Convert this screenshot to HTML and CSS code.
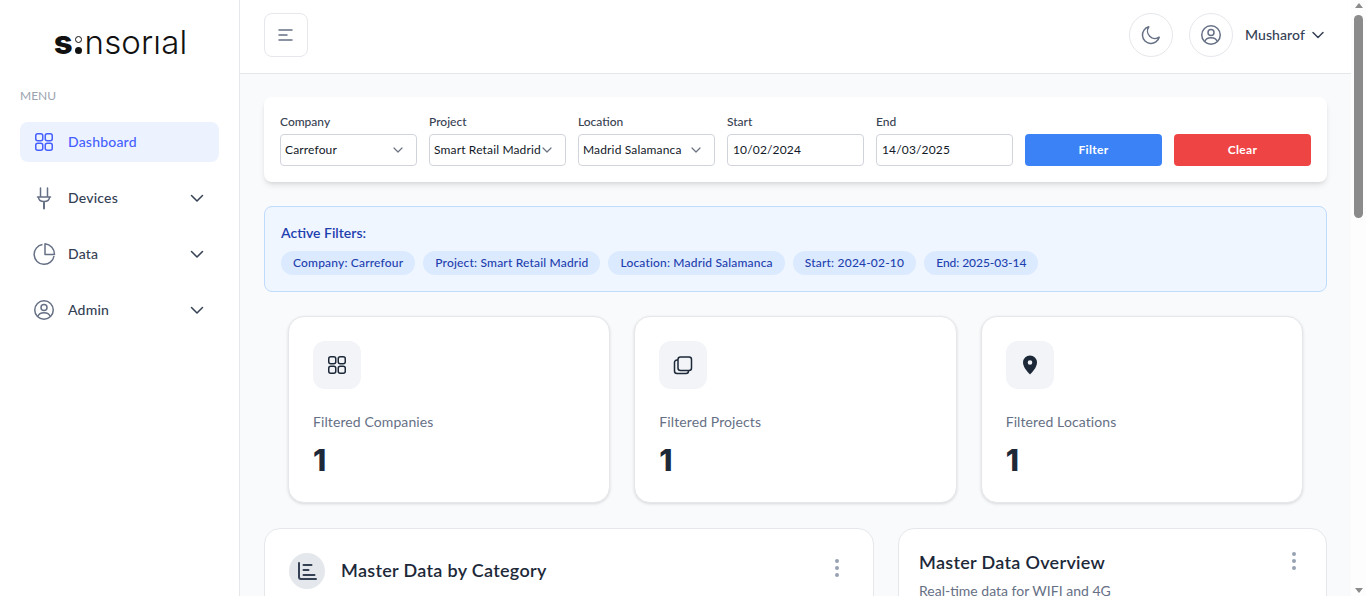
FILE: index.html
```html
<!DOCTYPE html>
<html lang="en">
<head>
    <meta charset="UTF-8">
    <title>Sensorial Dashboard</title>
    <link rel="stylesheet" href="styles.css">
</head>
<body>
<div class="app">
    <aside class="sidebar">
        <div class="logo"><span class="logo-s">s</span><span class="logo-colon"><i class="dot-ring"></i><i class="dot-fill"></i></span><span class="logo-rest">nsorıal</span></div>
        <div class="menu-label">MENU</div>
        <nav class="menu">
            <a class="menu-item active">
                <svg class="icon" viewBox="0 0 24 24" fill="none" stroke="currentColor" stroke-width="1.5"><rect x="3.75" y="3.75" width="7" height="7" rx="2"/><rect x="13.25" y="3.75" width="7" height="7" rx="2"/><rect x="3.75" y="13.25" width="7" height="7" rx="2"/><rect x="13.25" y="13.25" width="7" height="7" rx="2"/></svg>
                <span>Dashboard</span>
            </a>
            <a class="menu-item">
                <svg class="icon" viewBox="0 0 24 24" fill="none" stroke="currentColor" stroke-width="1.5" stroke-linecap="round" stroke-linejoin="round"><path d="M8.500 2v9M15.500 2v9M5.500 11h13M6.500 11c0 3 2 4.500 5.500 4.500s5.500-1.500 5.500-4.500"/><path d="M12 16.500v6" stroke-width="2"/></svg>
                <span>Devices</span>
                <svg class="chev" viewBox="0 0 16 16" fill="none" stroke="currentColor" stroke-width="1.5" stroke-linecap="round" stroke-linejoin="round"><path d="M2.500 5.500L8 11l5.500-5.500"/></svg>
            </a>
            <a class="menu-item">
                <svg class="icon" viewBox="0 0 24 24" fill="none" stroke="currentColor" stroke-width="1.5" stroke-linejoin="round"><path d="M10.500 2.500A10 10 0 1 0 22 14"/><path d="M13 1.800V12.500H22.500A10.500 10.500 0 0 0 13 1.800z"/></svg>
                <span>Data</span>
                <svg class="chev" viewBox="0 0 16 16" fill="none" stroke="currentColor" stroke-width="1.5" stroke-linecap="round" stroke-linejoin="round"><path d="M2.500 5.500L8 11l5.500-5.500"/></svg>
            </a>
            <a class="menu-item">
                <svg class="icon" viewBox="0 0 24 24" fill="none" stroke="currentColor" stroke-width="1.5"><circle cx="12" cy="12" r="9.250"/><circle cx="12" cy="9.500" r="3"/><path d="M5.800 18.500c.8-2.300 3.200-3.800 6.200-3.800s5.400 1.500 6.200 3.800"/></svg>
                <span>Admin</span>
                <svg class="chev" viewBox="0 0 16 16" fill="none" stroke="currentColor" stroke-width="1.5" stroke-linecap="round" stroke-linejoin="round"><path d="M2.500 5.500L8 11l5.500-5.500"/></svg>
            </a>
        </nav>
    </aside>

    <div class="content">
        <header class="topbar">
            <button class="square-btn">
                <svg viewBox="0 0 16 12" width="16" height="12" fill="none" stroke="#667085" stroke-width="1.5" stroke-linecap="round"><path d="M1 1h13M1 6h8M1 11h13"/></svg>
            </button>
            <div class="topbar-right">
                <button class="round-btn">
                    <svg viewBox="0 0 20 20" width="20" height="20" fill="none" stroke="#667085" stroke-width="1.5" stroke-linejoin="round"><path d="M7.800 1.800A8.500 8.500 0 1 0 18.200 12.200 7.500 7.500 0 0 1 7.800 1.800z"/></svg>
                </button>
                <button class="round-btn">
                    <svg viewBox="0 0 24 24" width="24" height="24" fill="none" stroke="#667085" stroke-width="1.500"><circle cx="12" cy="12" r="9.250"/><circle cx="12" cy="9.500" r="3"/><path d="M5.800 18.500c.8-2.300 3.200-3.800 6.200-3.800s5.400 1.500 6.200 3.800"/></svg>
                </button>
                <div class="user">
                    <span>Musharof</span>
                    <svg viewBox="0 0 16 16" width="16" height="16" fill="none" stroke="#344054" stroke-width="1.500" stroke-linecap="round" stroke-linejoin="round"><path d="M3 5.500l5 5 5-5"/></svg>
                </div>
            </div>
        </header>

        <main class="main">
            <section class="filter-card">
                <div class="field">
                    <label>Company</label>
                    <div class="control select"><span>Carrefour</span><svg viewBox="0 0 12 12" class="caret" fill="none" stroke="#6b7280" stroke-width="1.200" stroke-linecap="round" stroke-linejoin="round"><path d="M2 4l4 4 4-4"/></svg></div>
                </div>
                <div class="field">
                    <label>Project</label>
                    <div class="control select"><span>Smart Retail Madrid</span><svg viewBox="0 0 12 12" class="caret" fill="none" stroke="#6b7280" stroke-width="1.200" stroke-linecap="round" stroke-linejoin="round"><path d="M2 4l4 4 4-4"/></svg></div>
                </div>
                <div class="field">
                    <label>Location</label>
                    <div class="control select"><span>Madrid Salamanca</span><svg viewBox="0 0 12 12" class="caret" fill="none" stroke="#6b7280" stroke-width="1.200" stroke-linecap="round" stroke-linejoin="round"><path d="M2 4l4 4 4-4"/></svg></div>
                </div>
                <div class="field">
                    <label>Start</label>
                    <div class="control date">10/02/2024</div>
                </div>
                <div class="field">
                    <label>End</label>
                    <div class="control date">14/03/2025</div>
                </div>
                <button class="action filter">Filter</button>
                <button class="action clear">Clear</button>
            </section>

            <section class="active-filters">
                <div class="active-title">Active Filters:</div>
                <div class="chips">
                    <span class="chip">Company: Carrefour</span>
                    <span class="chip">Project: Smart Retail Madrid</span>
                    <span class="chip">Location: Madrid Salamanca</span>
                    <span class="chip chip-start">Start: 2024-02-10</span>
                    <span class="chip chip-end">End: 2025-03-14</span>
                </div>
            </section>

            <section class="stats">
                <div class="stat-card">
                    <div class="stat-icon"><svg viewBox="0 0 24 24" width="24" height="24" fill="none" stroke="#1d2939" stroke-width="1.500"><rect x="3.750" y="3.750" width="7" height="7" rx="2"/><rect x="13.250" y="3.750" width="7" height="7" rx="2"/><rect x="3.750" y="13.250" width="7" height="7" rx="2"/><rect x="13.250" y="13.250" width="7" height="7" rx="2"/></svg></div>
                    <div class="stat-label">Filtered Companies</div>
                    <div class="stat-value">1</div>
                </div>
                <div class="stat-card">
                    <div class="stat-icon"><svg viewBox="0 0 24 24" width="24" height="24" fill="none" stroke="#1d2939" stroke-width="1.500" stroke-linejoin="round"><rect x="7" y="4" width="13.500" height="13.500" rx="2.500"/><path d="M7 7H6a2.500 2.500 0 0 0-2.500 2.500v8.500A2.500 2.500 0 0 0 6 20.500h9a2.500 2.500 0 0 0 2.500-2.500"/></svg></div>
                    <div class="stat-label">Filtered Projects</div>
                    <div class="stat-value">1</div>
                </div>
                <div class="stat-card">
                    <div class="stat-icon"><svg viewBox="0 0 24 24" width="24" height="24"><path fill="#1d2939" fill-rule="evenodd" d="M12 2.500a7 7 0 0 0-7 7c0 4.800 5 10 7 12 2-2 7-7.200 7-12a7 7 0 0 0-7-7zm0 9.300a2.300 2.300 0 1 1 0-4.600 2.300 2.300 0 0 1 0 4.600z"/></svg></div>
                    <div class="stat-label">Filtered Locations</div>
                    <div class="stat-value">1</div>
                </div>
            </section>

            <section class="charts">
                <div class="chart-card category">
                    <div class="chart-head">
                        <div class="chart-badge"><svg viewBox="0 0 24 24" width="24" height="24" fill="none" stroke="#344054" stroke-width="2" stroke-linecap="round"><path d="M4 4v14a2 2 0 0 0 2 2h15M8.500 6h8M8.500 11h5M8.500 16h11"/></svg></div>
                        <h3>Master Data by Category</h3>
                        <svg class="more" viewBox="0 0 4 20" width="4" height="20" fill="#98a2b3"><circle cx="2" cy="3" r="2"/><circle cx="2" cy="10" r="2"/><circle cx="2" cy="17" r="2"/></svg>
                    </div>
                </div>
                <div class="chart-card overview">
                    <div class="overview-head">
                        <div>
                            <h3>Master Data Overview</h3>
                            <p>Real-time data for WIFI and 4G</p>
                        </div>
                        <svg class="more" viewBox="0 0 4 20" width="4" height="20" fill="#98a2b3"><circle cx="2" cy="3" r="2"/><circle cx="2" cy="10" r="2"/><circle cx="2" cy="17" r="2"/></svg>
                    </div>
                </div>
            </section>
        </main>
    </div>

    <div class="scrollbar">
        <i class="arrow-up"></i>
        <div class="scroll-track"><div class="scroll-thumb"></div></div>
        <i class="arrow-down"></i>
    </div>
</div>
</body>
</html>
```

FILE: styles.css
```css
* {
    box-sizing: border-box;
}
body {
    margin: 0;
    font-family: "Lato", "Liberation Sans", sans-serif;
    color: #344054;
    background-color: #f9fafb;
}
button {
    font-family: inherit;
    cursor: pointer;
}
svg {
    display: block;
    flex-shrink: 0;
}
.app {
    display: flex;
    height: 100vh;
    overflow: hidden;
}

/* sidebar */
.sidebar {
    width: 240px;
    flex-shrink: 0;
    background-color: #fff;
    border-right: 1px solid #e5e7eb;
    padding: 0 20px;
}
.logo {
    height: 88px;
    padding: 24px 0 0 2px;
    text-align: center;
    white-space: nowrap;
    color: #111;
    font-family: "Inter", sans-serif;
    font-size: 33px;
    line-height: 36px;
}
.logo-s {
    font-weight: 800;
}
.logo-colon {
    display: inline-block;
    margin: 0 3px 0 2px;
}
.logo-colon i {
    display: block;
    width: 7px;
    height: 7px;
    border-radius: 50%;
}
.dot-ring {
    border: 1.5px solid #111;
    margin-bottom: 4px;
}
.dot-fill {
    background: #111;
}
.logo-rest {
    font-weight: 300;
    letter-spacing: 0.15px;
}
.menu-label {
    font-size: 12px;
    line-height: 16px;
    color: #9ca3af;
    margin-bottom: 18px;
}
.menu {
    display: flex;
    flex-direction: column;
    gap: 16px;
}
.menu-item {
    display: flex;
    align-items: center;
    gap: 12px;
    height: 40px;
    padding: 0 12px;
    border-radius: 8px;
    font-size: 14px;
    font-weight: 500;
    letter-spacing: 0.2px;
    color: #344054;
}
.menu-item span {
    margin-top: -2px;
}
.menu-item .icon {
    width: 24px;
    height: 24px;
    color: #667085;
}
.menu-item .chev {
    width: 16px;
    height: 16px;
    margin-left: auto;
    margin-right: 2px;
}
.menu-item.active {
    background-color: #ecf3ff;
    color: #465fff;
}
.menu-item.active .icon {
    color: #465fff;
}

/* header */
.content {
    flex: 1;
    min-width: 0;
}
.topbar {
    height: 74px;
    background-color: #fff;
    border-bottom: 1px solid #e5e7eb;
    padding: 13px 24px 0;
    display: flex;
    align-items: flex-start;
    justify-content: space-between;
}
.square-btn {
    width: 44px;
    height: 44px;
    background: #fff;
    border: 1px solid #e5e7eb;
    border-radius: 8px;
    display: flex;
    align-items: center;
    justify-content: center;
}
.topbar-right {
    display: flex;
    align-items: center;
    gap: 16px;
}
.round-btn {
    width: 44px;
    height: 44px;
    background: #fff;
    border: 1px solid #e5e7eb;
    border-radius: 50%;
    display: flex;
    align-items: center;
    justify-content: center;
}
.user {
    display: flex;
    align-items: center;
    gap: 5px;
    margin-left: -4px;
    margin-right: 1px;
    font-size: 14px;
    font-weight: 500;
    letter-spacing: 0.1px;
    color: #344054;
}
.user span {
    margin-top: -2px;
}

/* main */
.main {
    padding: 23px 24px;
}
.filter-card {
    display: grid;
    grid-template-columns: repeat(7, 1fr);
    gap: 12px;
    align-items: end;
    background-color: #fff;
    border-radius: 8px;
    padding: 16px;
    height: 85px;
    box-shadow: 0 4px 6px -1px rgba(0,0,0,0.1), 0 2px 4px -2px rgba(0,0,0,0.1);
}
.field label {
    display: block;
    font-size: 12px;
    line-height: 16px;
    margin-bottom: 4px;
    color: #374151;
    font-weight: 500;
}
.control {
    height: 32px;
    border: 1px solid #d1d5db;
    border-radius: 4px;
    background: #fff;
    font-size: 12px;
    letter-spacing: 0.15px;
    color: #111827;
    display: flex;
    align-items: center;
    padding: 0 4px 2px;
    white-space: nowrap;
}
.control.date {
    padding-left: 5px;
}
.select {
    justify-content: space-between;
}
.caret {
    width: 12px;
    height: 12px;
    margin-right: 8px;
    margin-top: 2px;
}
.action {
    height: 32px;
    border: none;
    border-radius: 4px;
    color: #fff;
    font-size: 12px;
    font-weight: 700;
    letter-spacing: 0.3px;
    padding: 0 0 2px;
}
.filter {
    background-color: #3b82f6;
}
.clear {
    background-color: #ef4444;
}

.active-filters {
    margin-top: 24px;
    height: 86px;
    background-color: #eff6ff;
    border: 1px solid #bfdbfe;
    border-radius: 8px;
    padding: 16px;
}
.active-title {
    font-size: 14px;
    line-height: 20px;
    font-weight: 600;
    color: #1e40af;
    margin-bottom: 8px;
}
.chips {
    display: flex;
    gap: 8px;
}
.chip {
    height: 24px;
    line-height: 24px;
    padding: 0 12px;
    border-radius: 12px;
    background-color: #dbeafe;
    color: #1e40af;
    font-size: 12px;
    font-weight: 500;
    letter-spacing: 0.18px;
}
.chip-start {
    letter-spacing: 0.2px;
}
.chip-end {
    letter-spacing: -0.05px;
}

.stats {
    display: grid;
    grid-template-columns: repeat(3, 1fr);
    gap: 24px;
    padding: 0 24px;
    margin-top: 24px;
}
.stat-card {
    height: 187px;
    background-color: #fff;
    border: 1px solid #e5e7eb;
    border-radius: 16px;
    padding: 24px;
    box-shadow: 0 1px 3px rgba(16,24,40,0.15);
}
.stat-icon {
    width: 48px;
    height: 48px;
    background-color: #f2f4f7;
    border-radius: 12px;
    display: flex;
    align-items: center;
    justify-content: center;
}
.stat-label {
    margin-top: 23px;
    font-size: 14px;
    line-height: 20px;
    letter-spacing: 0.1px;
    color: #667085;
}
.stat-value {
    margin-top: 9px;
    font-family: "Inter", sans-serif;
    font-size: 30px;
    line-height: 38px;
    font-weight: 800;
    color: #1d2939;
}

.charts {
    display: grid;
    grid-template-columns: 610px 1fr;
    gap: 24px;
    margin-top: 25px;
}
.chart-card {
    height: 500px;
    background-color: #fff;
    border: 1px solid #e5e7eb;
    border-radius: 16px;
}
.category {
    padding: 24px;
}
.chart-head {
    display: flex;
    align-items: center;
    gap: 16px;
}
.chart-badge {
    width: 36px;
    height: 36px;
    border-radius: 50%;
    background-color: #e4e7ec;
    display: flex;
    align-items: center;
    justify-content: center;
}
.chart-head h3 {
    margin-top: -2px;
}
.chart-head .more {
    margin-left: auto;
    margin-right: 10px;
    margin-top: -6px;
}
.chart-card h3 {
    font-size: 18px;
    line-height: 24px;
    font-weight: 600;
    letter-spacing: 0.3px;
    color: #1d2939;
    margin-bottom: 0;
}
.overview {
    padding: 21px 20px;
}
.overview-head {
    display: flex;
    justify-content: space-between;
}
.overview-head h3 {
    margin-top: 0;
}
.overview-head p {
    margin: 7px 0 0;
    font-size: 14px;
    line-height: 20px;
    color: #667085;
}
.overview-head .more {
    margin-right: 10px;
    margin-top: 1px;
}

/* page scrollbar */
.scrollbar {
    width: 15px;
    flex-shrink: 0;
    background-color: #fdfdfd;
    display: flex;
    flex-direction: column;
    align-items: center;
    padding: 3px 0;
}
.scroll-track {
    flex: 1;
    width: 9px;
    padding-top: 7px;
}
.scroll-thumb {
    height: 203px;
    background-color: #8b8b8b;
    border-radius: 5px;
}
.arrow-up,
.arrow-down {
    width: 0;
    height: 0;
    border-left: 4.5px solid transparent;
    border-right: 4.5px solid transparent;
}
.arrow-up {
    border-bottom: 5px solid #8b8b8b;
}
.arrow-down {
    border-top: 5px solid #8b8b8b;
}
```
